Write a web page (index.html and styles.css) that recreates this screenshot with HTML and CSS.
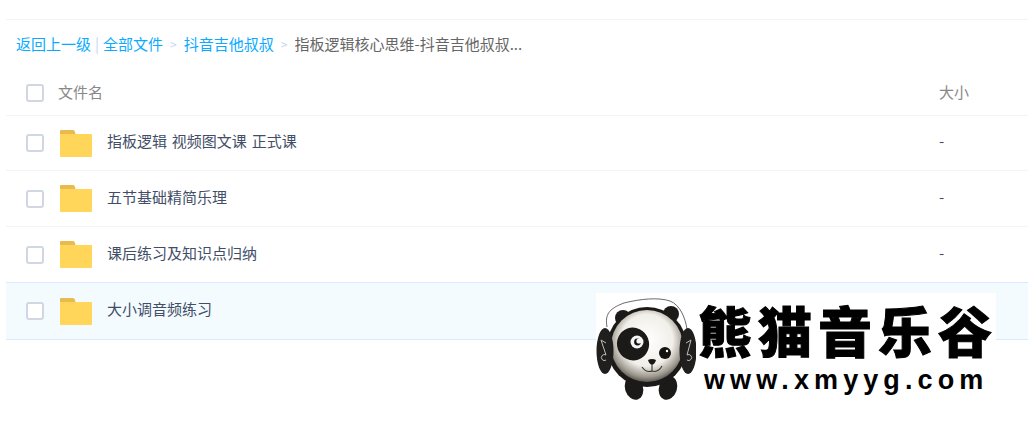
FILE: index.html
```html
<!DOCTYPE HTML>
<html>

<head>
    <meta charset="UTF-8">
    <title>文件列表</title>
    <link rel="stylesheet" href="styles.css">
</head>

<body>
    <div class="file-panel">
        <div class="crumbs">
            <a>返回上一级</a>
            <span class="pipe">|</span>
            <a>全部文件</a>
            <span class="arrow">&gt;</span>
            <a>抖音吉他叔叔</a>
            <span class="arrow">&gt;</span>
            <span class="current">指板逻辑核心思维-抖音吉他叔叔...</span>
        </div>

        <div class="row head">
            <span class="check"></span>
            <span class="name">文件名</span>
            <span class="size">大小</span>
        </div>

        <div class="row first">
            <span class="check"></span>
            <svg class="folder" viewBox="0 0 32 27"><use href="#folder-icon"></use></svg>
            <span class="name">指板逻辑 视频图文课 正式课</span>
            <span class="size">-</span>
        </div>
        <div class="row">
            <span class="check"></span>
            <svg class="folder" viewBox="0 0 32 27"><use href="#folder-icon"></use></svg>
            <span class="name">五节基础精简乐理</span>
            <span class="size">-</span>
        </div>
        <div class="row">
            <span class="check"></span>
            <svg class="folder" viewBox="0 0 32 27"><use href="#folder-icon"></use></svg>
            <span class="name">课后练习及知识点归纳</span>
            <span class="size">-</span>
        </div>
        <div class="row hover">
            <span class="check"></span>
            <svg class="folder" viewBox="0 0 32 27"><use href="#folder-icon"></use></svg>
            <span class="name">大小调音频练习</span>
        </div>
    </div>

    <div class="logo">
        <svg class="panda" viewBox="6 8 100 112">
            <defs>
                <radialGradient id="face" cx="50%" cy="42%" r="60%">
                    <stop offset="0%" stop-color="#ffffff"></stop>
                    <stop offset="60%" stop-color="#f1efe9"></stop>
                    <stop offset="85%" stop-color="#9d988e"></stop>
                    <stop offset="100%" stop-color="#4a4640"></stop>
                </radialGradient>
            </defs>
            <path d="M17 42 C15 30 18 24 34 18 C50 14 68 12 80 16 C90 20 95 32 97 44" fill="#fff" stroke="#444" stroke-width=".8"></path>
            <circle cx="33" cy="33" r="8" fill="#1c1a18"></circle>
            <circle cx="81" cy="29" r="8" fill="#1c1a18"></circle>
            <ellipse cx="44" cy="103" rx="9" ry="12" fill="#1c1a18" transform="rotate(-18 44 103)"></ellipse>
            <ellipse cx="78" cy="103" rx="9" ry="12" fill="#1c1a18" transform="rotate(18 78 103)"></ellipse>
            <circle cx="57" cy="62" r="40" fill="#1c1a18"></circle>
            <circle cx="57" cy="61" r="36" fill="url(#face)"></circle>
            <ellipse cx="15" cy="66" rx="8.5" ry="23" fill="#211f1d"></ellipse>
            <ellipse cx="98" cy="66" rx="8.5" ry="23" fill="#211f1d"></ellipse>
            <path d="M11 55 L16 70 M16 70 a3 3 0 1 0 .1 5 M11 55 L16 58" fill="none" stroke="#bbb" stroke-width="1"></path>
            <path d="M101 55 L97 70 M97 70 a3 3 0 1 1 -.1 5 M101 55 L96 58" fill="none" stroke="#bbb" stroke-width="1"></path>
            <ellipse cx="43" cy="59" rx="16" ry="16.5" fill="#1c1a18" transform="rotate(-20 43 59)"></ellipse>
            <circle cx="47" cy="57" r="6.5" fill="#f5f5f5"></circle>
            <circle cx="47.5" cy="57" r="3.4" fill="#111"></circle>
            <circle cx="49" cy="56" r="2.6" fill="#f5f5f5"></circle>
            <circle cx="75" cy="68" r="6" fill="#141210"></circle>
            <circle cx="77" cy="66" r="1.2" fill="#fff"></circle>
            <path d="M58 75 Q62 73 66 75 Q65 79 62 80 Q59 79 58 75 Z" fill="#1a1816"></path>
            <path d="M52 82 Q56 88 62 86 Q68 88 72 81 M62 80 V86" fill="none" stroke="#3a3632" stroke-width="1.1"></path>
        </svg>
        <div class="logo-text">
            <div class="logo-title">熊猫音乐谷</div>
            <div class="logo-url">www.xmyyg.com</div>
        </div>
    </div>

    <svg class="sprite">
        <symbol id="folder-icon" viewBox="0 0 32 27">
            <path d="M1 0 H13 Q14.5 0 15 2 L15.5 4 H0 V1 Q0 0 1 0 Z" fill="#e9bb4f"></path>
            <path d="M1 4 H31 Q32 4 32 5 V26 Q32 27 31 27 H1 Q0 27 0 26 V5 Q0 4 1 4 Z" fill="#ffd659"></path>
        </symbol>
    </svg>
</body>

</html>
```

FILE: styles.css
```css
body {
    margin: 0;
    height: 435px;
    overflow: hidden;
    position: relative;
    background-color: #fff;
    font-size: 15px;
    font-family: "Noto Sans CJK SC", "Liberation Sans", sans-serif;
    color: #424e67;
}

.file-panel {
    margin: 19px 0 0 6px;
    border-top: 1px solid #f4f4f4;
}

.crumbs {
    height: 46px;
    padding: 0 0 5px 10px;
    display: flex;
    align-items: center;
    color: #09aaff;
    white-space: nowrap;
}

.pipe {
    margin: 0 4px;
    color: #c4d8f4;
}

.arrow {
    margin: 0 7px;
    color: #c5d8f3;
    font-size: 12px;
}

.current {
    color: #666;
}

.row {
    height: 55px;
    padding-left: 20px;
    display: flex;
    align-items: center;
    border-bottom: 1px solid #f4f4f4;
}

.row.first {
    height: 54px;
}

.row.head {
    height: 44px;
    color: #888;
}

.row.hover {
    height: 56px;
    background-color: #f4fbff;
    border-top: 1px solid #daebfe;
    border-bottom: 1px solid #daebfe;
    margin-top: -1px;
}

.check {
    width: 14px;
    height: 14px;
    border: 2px solid #d0d7e2;
    border-radius: 3px;
    background-color: #fff;
    flex: none;
}

.folder {
    width: 32px;
    height: 27px;
    margin-left: 16px;
    flex: none;
}

.name {
    margin-left: 15px;
    margin-bottom: 5px;
    flex: 1;
    word-spacing: 1.5px;
}

.head .name {
    margin-left: 14px;
    margin-bottom: 3px;
}

.size {
    width: 89px;
    margin-bottom: 5px;
    flex: none;
}

.head .size {
    margin-bottom: 3px;
}

.sprite {
    display: none;
}

.logo {
    position: absolute;
    left: 596px;
    top: 293px;
    width: 400px;
    height: 112px;
    display: flex;
    background-color: #fff;
}

.panda {
    width: 100px;
    height: 112px;
    flex: none;
}

.logo-text {
    color: #000;
    white-space: nowrap;
}

.logo-title {
    margin: 3px 0 0 2px;
    height: 68px;
    font-size: 54px;
    line-height: 68px;
    font-weight: 900;
    letter-spacing: 6px;
    -webkit-text-stroke: 1px #000;
}

.logo-url {
    margin-left: 8px;
    font-family: "Liberation Sans", sans-serif;
    font-size: 27px;
    line-height: 32px;
    font-weight: 700;
    letter-spacing: 5.1px;
}
```
